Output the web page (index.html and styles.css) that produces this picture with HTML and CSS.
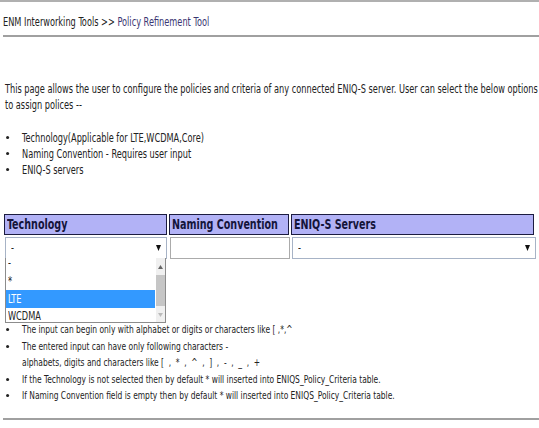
FILE: index.html
```html
<!DOCTYPE html>
<html>
<head>
<meta charset="utf-8">
<link rel="stylesheet" href="styles.css">
</head>
<body>
<div class="page">
<div class="topline"></div>
<div class="crumb"><div class="sq crumbtext">ENM Interworking Tools &gt;&gt; <span class="cur">Policy Refinement Tool</span></div></div>
<div class="rule"></div>
<p class="intro sq">This page allows the user to configure the policies and criteria of any connected ENIQ-S server. User can select the below options to assign polices --</p>
<ul class="list sq">
<li>Technology(Applicable for LTE,WCDMA,Core)</li>
<li>Naming Convention - Requires user input</li>
<li>ENIQ-S servers</li>
</ul>
<div class="grid">
  <div class="hd"><span class="t">Technology</span></div>
  <div class="hd"><span class="t">Naming Convention</span></div>
  <div class="hd"><span class="t">ENIQ-S Servers</span></div>
  <div class="cell">
    <div class="sel"><span class="t">-</span><svg class="arrow" width="5" height="6" viewBox="0 0 5 6"><polygon points="0,0 5,0 2.5,6" fill="#111"/></svg></div>
    <div class="dropdown">
      <div class="opts">
        <div class="opt first"><span class="t">-</span></div>
        <div class="opt"><span class="t">*</span></div>
        <div class="opt on"><span class="t">LTE</span></div>
        <div class="opt"><span class="t">WCDMA</span></div>
      </div>
      <div class="sb">
        <svg class="sbarrow" width="5" height="4" viewBox="0 0 5 4"><polygon points="0,4 5,4 2.5,0" fill="#666"/></svg>
        <span class="thumb"></span>
        <svg class="sbarrow dn" width="5" height="4" viewBox="0 0 5 4"><polygon points="0,0 5,0 2.5,4" fill="#bbb"/></svg>
      </div>
    </div>
  </div>
  <div class="cell"><div class="inp"></div></div>
  <div class="cell"><div class="sel wide"><span class="t">-</span><svg class="arrow" width="5" height="6" viewBox="0 0 5 6"><polygon points="0,0 5,0 2.5,6" fill="#111"/></svg></div></div>
</div>
<ul class="list rules sq">
<li>The input can begin only with alphabet or digits or characters like [ ,*,^</li>
<li><span>The entered input can have only following characters -<br>alphabets, digits and characters like <span class="chars">[ , * , ^ , ] , - , _ , +</span></span></li>
<li>If the Technology is not selected then by default * will inserted into ENIQS_Policy_Criteria table.</li>
<li>If Naming Convention field is empty then by default * will inserted into ENIQS_Policy_Criteria table.</li>
</ul>
<div class="rule bottom"></div>
</div>
</body>
</html>
```
FILE: styles.css
```css
body {
  margin: 0;
  font-family: "DejaVu Sans Condensed", "DejaVu Sans", sans-serif;
  font-size: 12px;
  color: #222;
  background: #fff;
}
.page {
  overflow: hidden;
  height: 428px;
}
.sq {
  transform: scaleX(0.76);
  transform-origin: 0 0;
}
.t {
  display: inline-block;
  white-space: nowrap;
  transform: scaleX(0.76);
  transform-origin: 0 50%;
}
.topline {
  height: 2px;
  background: #b0b0b0;
}
.crumb {
  padding: 13px 0 0 3px;
  height: 20px;
  line-height: 14px;
}
.crumbtext {
  width: 700px;
  color: #222;
}
.cur { color: #3a3672; }
.rule {
  margin-left: 3px;
  height: 2px;
  background: #a0a0a0;
}
.intro {
  margin: 44px 0 0 5px;
  width: 704px;
  line-height: 16px;
}
.list {
  margin: 17px 0 0 0;
  padding: 0;
  width: 700px;
  list-style: none;
  line-height: 16px;
}
.list li {
  display: flex;
  align-items: baseline;
}
.list li::before {
  content: "";
  flex: none;
  width: 4px;
  height: 3px;
  border-radius: 50%;
  background: #222;
  margin: 0 17px 0 8px;
  position: relative;
  top: -3px;
}
.grid {
  margin: 36px 0 0 4px;
  display: grid;
  grid-template-columns: 163px 120px 243px;
  column-gap: 2px;
  row-gap: 2px;
}
.hd {
  height: 21px;
  background: #b2b2f6;
  border: 1px solid #1c1c40;
  box-sizing: border-box;
  font-weight: bold;
  font-size: 14px;
  line-height: 19px;
  padding-left: 2px;
  color: #14143a;
}
.cell {
  position: relative;
  height: 22px;
}
.sel {
  box-sizing: border-box;
  height: 22px;
  width: 162px;
  margin-left: 1px;
  border: 1px solid #a7b3c6;
  display: flex;
  justify-content: space-between;
  align-items: center;
  padding: 0 5px 0 5px;
  background: #fff;
}
.sel.wide { width: 244px; }
.arrow { display: block; }
.inp {
  box-sizing: border-box;
  height: 22px;
  width: 120px;
  margin-left: 1px;
  border: 1px solid #ababab;
  background: #fff;
}
.dropdown {
  position: absolute;
  left: 1px;
  top: 21px;
  width: 161px;
  height: 65px;
  box-sizing: border-box;
  border: 1px solid #8c8c8c;
  border-top: none;
  background: #fff;
  display: flex;
}
.opts {
  flex: 1;
}
.opt {
  height: 16px;
  line-height: 16px;
  padding-left: 2px;
}
.opt.first {
  height: 14px;
  line-height: 10px;
}
.opt:nth-child(2) {
  height: 18px;
  line-height: 19px;
}
.opt.on {
  background: #3399ff;
  color: #fff;
  height: 18px;
  line-height: 18px;
  margin-right: 1px;
}
.sb {
  width: 9px;
  background: #f0f0f0;
  display: flex;
  flex-direction: column;
  align-items: center;
}
.sbarrow {
  display: block;
  margin-top: 7px;
}
.sbarrow.dn {
  margin-top: auto;
  margin-bottom: 5px;
}
.thumb {
  display: block;
  width: 9px;
  height: 31px;
  margin-top: 6px;
  background: #c6c6c6;
}
.rules {
  margin-top: 63px;
  font-size: 11px;
  line-height: 16.6px;
}
.rules li::before {
  top: -2px;
}
.chars {
  word-spacing: 2px;
  letter-spacing: 0.5px;
}
.bottom {
  margin-top: 13px;
}
```
